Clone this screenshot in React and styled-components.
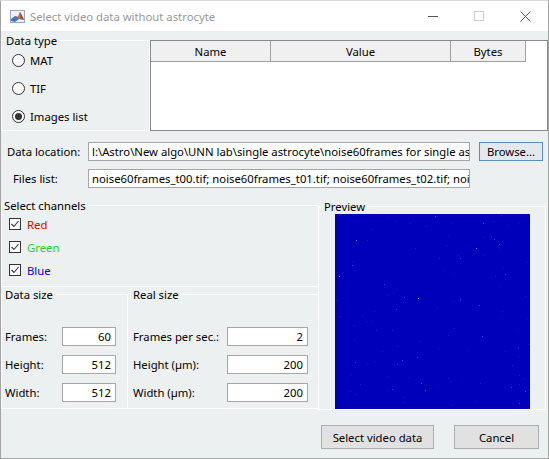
import styled, { createGlobalStyle } from "styled-components"

const GlobalStyle = createGlobalStyle`
  html, body {
    margin: 0;
    padding: 0;
    background: #fff;
  }
  body {
    font-family: "Noto Sans", "Open Sans", sans-serif;
    font-size: 11.3px;
    line-height: 15px;
    color: #000;
  }
  * { box-sizing: border-box; }
`

const WindowStyled = styled.div`
  width: 549px;
  height: 459px;
  border: 1px solid #a3a3a3;
  border-top-color: #dadada;
  display: flex;
  flex-direction: column;
  background: #ecf0f0;
`

const TitleBarStyled = styled.div`
  height: 30px;
  background: #fff;
  display: flex;
  align-items: center;
  padding-left: 9px;
`

const TitleTextStyled = styled.span`
  margin-left: 5px;
  color: #999;
`

const WinButtonsStyled = styled.div`
  margin-left: auto;
  display: flex;
  height: 100%;
`

const WinButtonStyled = styled.div`
  width: 46px;
  height: 100%;
  display: flex;
  align-items: center;
  justify-content: center;
`

const BodyStyled = styled.div`
  flex: 1;
  display: flex;
  flex-direction: column;
`

const TopRowStyled = styled.div`
  display: flex;
  height: 100px;
`

const PanelStyled = styled.fieldset`
  margin: ${p => p.$top || 0}px 0 0 0;
  padding: 0;
  min-width: 0;
  width: ${p => p.$w}px;
  height: ${p => p.$h}px;
  border: 1px solid #fff;
  ${p => p.$noRight && "border-right: none;"}
  flex-shrink: 0;
`

const LegendStyled = styled.legend`
  padding: 0 2px;
  margin-left: ${p => p.$indent || 0}px;
  line-height: 15px;
`

const RadioListStyled = styled.div`
  display: flex;
  flex-direction: column;
  gap: 12px;
  padding: 4px 0 0 10px;
`

const OptionRowStyled = styled.div`
  display: flex;
  align-items: center;
  height: 16px;
  gap: ${p => p.$gap}px;
  color: ${p => p.$color || "#000"};
`

const RadioCircleStyled = styled.span`
  width: 13px;
  height: 13px;
  border-radius: 50%;
  border: 1px solid #333;
  background: #fff;
  display: flex;
  align-items: center;
  justify-content: center;
  &::after {
    content: "";
    width: 7px;
    height: 7px;
    border-radius: 50%;
    background: ${p => (p.$on ? "#333" : "transparent")};
  }
`

const TableStyled = styled.div`
  flex: 1;
  margin-top: 9px;
  height: 91px;
  border: 1px solid #8a8a8a;
  background: #fff;
`

const TableHeadStyled = styled.div`
  display: flex;
  height: 21px;
`

const HeadCellStyled = styled.div`
  width: ${p => p.$w}px;
  background: #f0f0f0;
  border-right: 1px solid #a0a0a0;
  border-bottom: 1px solid #a0a0a0;
  display: flex;
  align-items: center;
  justify-content: center;
`

const FormRowStyled = styled.div`
  display: flex;
  align-items: center;
  height: 19px;
  margin-top: ${p => p.$top}px;
  padding-left: ${p => p.$pad}px;
`

const LabelStyled = styled.span`
  width: ${p => p.$w}px;
  flex-shrink: 0;
  white-space: nowrap;
`

const FieldStyled = styled.div`
  width: ${p => p.$w}px;
  height: 19px;
  background: #fff;
  border: 1px solid #a6a6a6;
  padding: 0 ${p => (p.$right ? 4 : 3)}px;
  display: flex;
  align-items: center;
  justify-content: ${p => (p.$right ? "flex-end" : "flex-start")};
  white-space: nowrap;
  overflow: hidden;
  flex-shrink: 0;
`

const ButtonStyled = styled.div`
  width: ${p => p.$w}px;
  height: ${p => p.$h}px;
  margin-left: ${p => p.$left || 0}px;
  background: ${p => (p.$focus ? "#e3e8ec" : "#e1e1e1")};
  border: 1px solid ${p => (p.$focus ? "#5d8bc4" : "#adadad")};
  display: flex;
  align-items: center;
  justify-content: center;
  flex-shrink: 0;
`

const LowerStyled = styled.div`
  display: flex;
  align-items: flex-start;
  margin-top: 10px;
`

const LeftColStyled = styled.div`
  width: 317px;
  display: flex;
  flex-direction: column;
`

const CheckListStyled = styled.div`
  display: flex;
  flex-direction: column;
  gap: 7px;
  padding: 3px 0 0 7px;
`

const SizesRowStyled = styled.div`
  display: flex;
`

const FieldListStyled = styled.div`
  display: flex;
  flex-direction: column;
  gap: 9px;
  padding: 25px 0 0 ${p => p.$pad}px;
`

const SizeRowStyled = styled.div`
  display: flex;
  align-items: center;
  height: 19px;
`

const PreviewImageStyled = styled.svg`
  display: block;
  margin: 0 auto;
`

const ButtonsRowStyled = styled.div`
  display: flex;
  justify-content: flex-end;
  margin-top: 15px;
  padding-right: 9px;
`

const MatlabIcon = () => (
  <svg width="15" height="13" viewBox="0 0 15 13">
    <rect x="0.5" y="0.5" width="14" height="12" fill="#eef2f6" stroke="#9aa7b5" />
    <polygon points="1,9 5,6 8,7 10,2 14,10 9,9 5,12 1,11" fill="#3a78c2" />
    <polygon points="5,6 8,7 10,2 12,6 9,9" fill="#e06a1b" />
    <polygon points="10,2 12,6 14,10 11,8" fill="#b8361a" />
  </svg>
)

const CheckBox = () => (
  <svg width="12" height="12" viewBox="0 0 12 12">
    <rect x="0.5" y="0.5" width="11" height="11" fill="#fff" stroke="#333" />
    <polyline points="2.5,6 5,8.5 9.5,3" fill="none" stroke="#333" strokeWidth="1.1" />
  </svg>
)

// blue preview frame with a few noisy bright pixels
const specks = (() => {
  let s = 60
  const rnd = () => {
    s = (s * 9301 + 49297) % 233280
    return s / 233280
  }
  const out = []
  for (let i = 0; i < 110; i++) {
    const v = rnd()
    out.push({
      x: Math.floor(rnd() * 195),
      y: Math.floor(rnd() * 195),
      c: v > 0.93 ? "#2aa0ff" : v > 0.7 ? "#1c48e8" : "#0c1ed0",
    })
  }
  return out
})()

const channels = [
  { name: "Red", color: "#e00000" },
  { name: "Green", color: "#1fd130" },
  { name: "Blue", color: "#1000f0" },
]

const dataSize = [
  ["Frames:", "60"],
  ["Height:", "512"],
  ["Width:", "512"],
]

const realSize = [
  ["Frames per sec.:", "2"],
  ["Height (\u00b5m):", "200"],
  ["Width (\u00b5m):", "200"],
]

const App = () => {
  return (
    <>
      <GlobalStyle />
      <WindowStyled>
        <TitleBarStyled>
          <MatlabIcon />
          <TitleTextStyled>Select video data without astrocyte</TitleTextStyled>
          <WinButtonsStyled>
            <WinButtonStyled>
              <svg width="10" height="10"><line x1="0" y1="5.5" x2="10" y2="5.5" stroke="#555" /></svg>
            </WinButtonStyled>
            <WinButtonStyled>
              <svg width="10" height="10"><rect x="0.5" y="0.5" width="9" height="9" fill="none" stroke="#ccc" /></svg>
            </WinButtonStyled>
            <WinButtonStyled>
              <svg width="11" height="11"><path d="M0.5 0.5 L10.5 10.5 M10.5 0.5 L0.5 10.5" stroke="#555" /></svg>
            </WinButtonStyled>
          </WinButtonsStyled>
        </TitleBarStyled>

        <BodyStyled>
          <TopRowStyled>
            <PanelStyled $w={149} $h={98} $top={2}>
              <LegendStyled $indent={2}>Data type</LegendStyled>
              <RadioListStyled>
                <OptionRowStyled $gap={5}><RadioCircleStyled />MAT</OptionRowStyled>
                <OptionRowStyled $gap={5}><RadioCircleStyled />TIF</OptionRowStyled>
                <OptionRowStyled $gap={5}><RadioCircleStyled $on />Images list</OptionRowStyled>
              </RadioListStyled>
            </PanelStyled>
            <TableStyled>
              <TableHeadStyled>
                <HeadCellStyled $w={120}>Name</HeadCellStyled>
                <HeadCellStyled $w={180}>Value</HeadCellStyled>
                <HeadCellStyled $w={75}>Bytes</HeadCellStyled>
              </TableHeadStyled>
            </TableStyled>
          </TopRowStyled>

          <FormRowStyled $top={11} $pad={6}>
            <LabelStyled $w={81}>Data location:</LabelStyled>
            <FieldStyled $w={382}>
              l:\Astro\New algo\UNN lab\single astrocyte\noise60frames for single astrocyte
            </FieldStyled>
            <ButtonStyled $w={64} $h={19} $left={9} $focus>Browse...</ButtonStyled>
          </FormRowStyled>

          <FormRowStyled $top={8} $pad={12}>
            <LabelStyled $w={75}>Files list:</LabelStyled>
            <FieldStyled $w={382}>
              noise60frames_t00.tif; noise60frames_t01.tif; noise60frames_t02.tif; noise60frames_t03.tif
            </FieldStyled>
          </FormRowStyled>

          <LowerStyled>
            <LeftColStyled>
              <PanelStyled $w={317} $h={89} $noRight>
                <LegendStyled>Select channels</LegendStyled>
                <CheckListStyled>
                  {channels.map(ch => (
                    <OptionRowStyled key={ch.name} $gap={6} $color={ch.color}>
                      <CheckBox />
                      {ch.name}
                    </OptionRowStyled>
                  ))}
                </CheckListStyled>
              </PanelStyled>

              <SizesRowStyled>
                <PanelStyled $w={126} $h={122} $noRight>
                  <LegendStyled $indent={1}>Data size</LegendStyled>
                  <FieldListStyled $pad={3}>
                    {dataSize.map(([label, value]) => (
                      <SizeRowStyled key={label}>
                        <LabelStyled $w={57}>{label}</LabelStyled>
                        <FieldStyled $w={54} $right>{value}</FieldStyled>
                      </SizeRowStyled>
                    ))}
                  </FieldListStyled>
                </PanelStyled>
                <PanelStyled $w={191} $h={122} $noRight>
                  <LegendStyled $indent={3}>Real size</LegendStyled>
                  <FieldListStyled $pad={5}>
                    {realSize.map(([label, value]) => (
                      <SizeRowStyled key={label}>
                        <LabelStyled $w={94}>{label}</LabelStyled>
                        <FieldStyled $w={81} $right>{value}</FieldStyled>
                      </SizeRowStyled>
                    ))}
                  </FieldListStyled>
                </PanelStyled>
              </SizesRowStyled>
            </LeftColStyled>

            <PanelStyled $w={228} $h={211} $top={1}>
              <LegendStyled $indent={3}>Preview</LegendStyled>
              <PreviewImageStyled width="195" height="195" viewBox="0 0 195 195">
                <rect width="195" height="195" fill="#0000bb" />
                {specks.map((p, i) => (
                  <rect key={i} x={p.x} y={p.y} width="1" height="1" fill={p.c} />
                ))}
              </PreviewImageStyled>
            </PanelStyled>
          </LowerStyled>

          <ButtonsRowStyled>
            <ButtonStyled $w={113} $h={24}>Select video data</ButtonStyled>
            <ButtonStyled $w={85} $h={24} $left={20}>Cancel</ButtonStyled>
          </ButtonsRowStyled>
        </BodyStyled>
      </WindowStyled>
    </>
  )
}

export default App
